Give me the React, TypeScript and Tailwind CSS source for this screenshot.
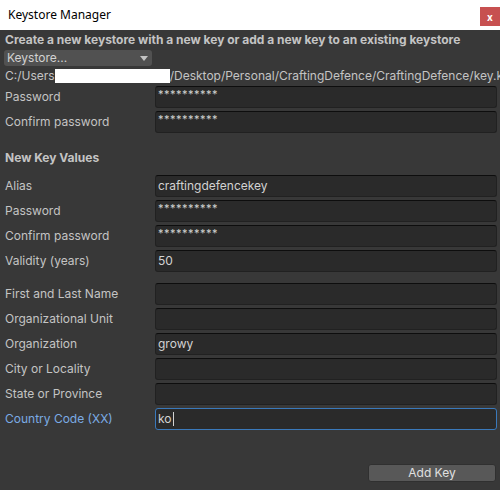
import React from 'react';

type Field = { label: string; value?: string; focused?: boolean };

const storeFields: Field[] = [
  { label: 'Password', value: '**********' },
  { label: 'Confirm password', value: '**********' },
];

const keyFields: Field[] = [
  { label: 'Alias', value: 'craftingdefencekey' },
  { label: 'Password', value: '**********' },
  { label: 'Confirm password', value: '**********' },
  { label: 'Validity (years)', value: '50' },
];

const ownerFields: Field[] = [
  { label: 'First and Last Name' },
  { label: 'Organizational Unit' },
  { label: 'Organization', value: 'growy' },
  { label: 'City or Locality' },
  { label: 'State or Province' },
  { label: 'Country Code (XX)', value: 'ko', focused: true },
];

function FieldRow({ field }: { field: Field }) {
  const masked = field.value?.startsWith('*');
  return (
    <div className="flex h-[25px] items-center">
      <div className={`w-[150px] shrink-0 text-[12px] ${field.focused ? 'text-[#7babe4]' : 'text-[#c4c4c4]'}`}>
        {field.label}
      </div>
      <div
        className={`mr-[3px] flex h-[22px] flex-1 items-center rounded-[3px] border bg-[#2a2a2a] px-[2px] text-[12px] text-[#d2d2d2] ${
          field.focused ? 'border-[#3a79bb]' : 'border-[#212121] border-t-[#0d0d0d]'
        }`}
      >
        {masked ? (
          <span className="-mt-[5px] text-[11px] tracking-[0.5px]">{field.value}</span>
        ) : (
          <span>{field.value}</span>
        )}
        {field.focused && <span className="ml-px h-[14px] w-px bg-[#d2d2d2]" />}
      </div>
    </div>
  );
}

export default function App() {
  return (
    <div className="h-[490px] w-[500px] overflow-hidden bg-[#383838]" style={{ fontFamily: 'Inter, "Noto Sans", sans-serif' }}>
      {/* Title bar */}
      <div className="flex h-[30px] items-start bg-white">
        <div className="flex h-[30px] flex-1 items-center pl-[8px] text-[12px] text-black" style={{ fontFamily: '"Noto Sans", sans-serif' }}>
          Keystore Manager
        </div>
        <div className="mt-[7px] flex h-[19px] w-[20px] items-center justify-center bg-[#c75050] text-[10px] font-bold leading-none text-white">
          x
        </div>
      </div>

      <div className="pl-[5px]">
        <div className="flex h-[20px] items-center whitespace-nowrap text-[12px] font-bold text-[#c4c4c4]">
          Create a new keystore with a new key or add a new key to an existing keystore
        </div>
        <div className="-ml-px flex h-[16px] w-[148px] items-center justify-between rounded-[3px] bg-[#515151] pl-[3px] pr-[4px] text-[12px] text-[#d2d2d2]">
          <span>Keystore...</span>
          <svg width="8" height="5" viewBox="0 0 8 5">
            <path d="M0 0 L8 0 L4 5 Z" fill="#c4c4c4" />
          </svg>
        </div>
        <div className="flex h-[18.5px] items-center overflow-hidden whitespace-nowrap pt-[2px] text-[12px] text-[#c4c4c4]">
          <span>C:/Users</span>
          <span className="inline-block h-[14px] w-[115px] shrink-0 bg-white" />
          <span>/Desktop/Personal/CraftingDefence/CraftingDefence/key.keystore</span>
        </div>

        {storeFields.map((f, i) => (
          <FieldRow key={'s' + i} field={f} />
        ))}

        <div className="mb-[5.5px] mt-[13.5px] flex h-[20px] items-center text-[12px] font-bold text-[#c4c4c4]">
          New Key Values
        </div>

        {keyFields.map((f, i) => (
          <FieldRow key={'k' + i} field={f} />
        ))}

        <div className="h-[8px]" />

        {ownerFields.map((f, i) => (
          <FieldRow key={'o' + i} field={f} />
        ))}

        <div className="mt-[32.5px] flex justify-end pr-[4px]">
          <button className="flex h-[18px] w-[128px] items-center justify-center rounded-[3px] border border-[#303030] bg-[#585858] text-[12px] text-[#e0e0e0]">
            Add Key
          </button>
        </div>
      </div>
    </div>
  );
}
